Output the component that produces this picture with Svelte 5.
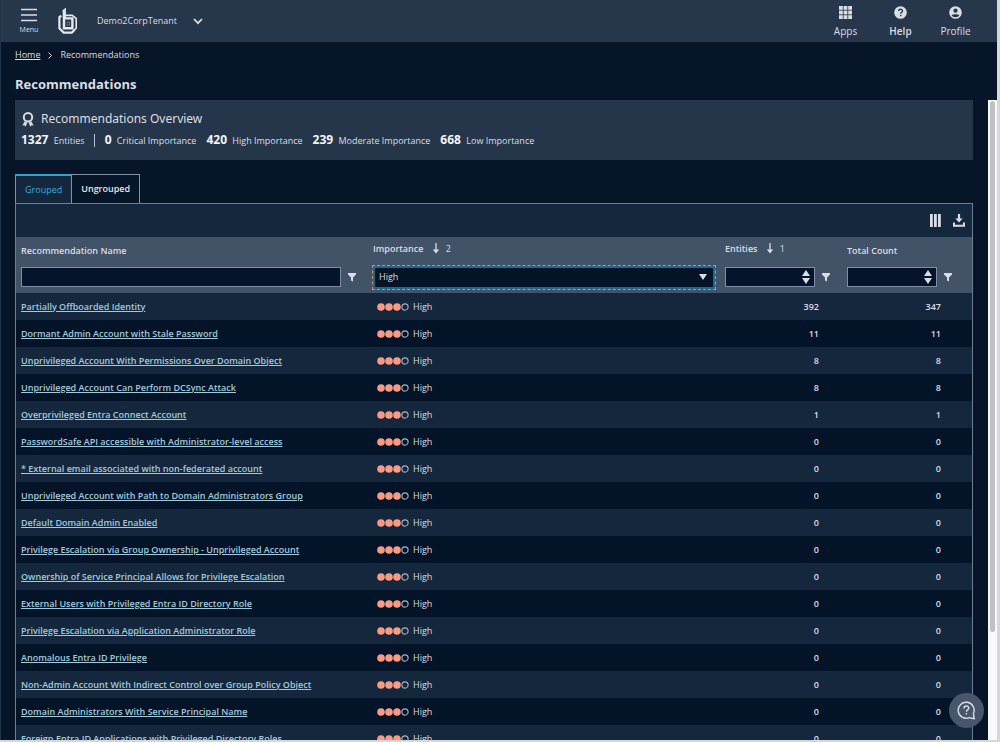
<script lang="ts">
	let tab = $state('grouped');
	let nameFilter = $state('');
	let importance = $state('High');
	let minEntities = $state<number | null>(null);
	let minTotal = $state<number | null>(null);

	const stats = [
		{ value: 0, label: 'Critical Importance' },
		{ value: 420, label: 'High Importance' },
		{ value: 239, label: 'Moderate Importance' },
		{ value: 668, label: 'Low Importance' }
	];

	const rows = [
		{ name: 'Partially Offboarded Identity', entities: 392, total: 347 },
		{ name: 'Dormant Admin Account with Stale Password', entities: 11, total: 11 },
		{ name: 'Unprivileged Account With Permissions Over Domain Object', entities: 8, total: 8 },
		{ name: 'Unprivileged Account Can Perform DCSync Attack', entities: 8, total: 8 },
		{ name: 'Overprivileged Entra Connect Account', entities: 1, total: 1 },
		{ name: 'PasswordSafe API accessible with Administrator-level access', entities: 0, total: 0 },
		{ name: '* External email associated with non-federated account', entities: 0, total: 0 },
		{ name: 'Unprivileged Account with Path to Domain Administrators Group', entities: 0, total: 0 },
		{ name: 'Default Domain Admin Enabled', entities: 0, total: 0 },
		{ name: 'Privilege Escalation via Group Ownership - Unprivileged Account', entities: 0, total: 0 },
		{ name: 'Ownership of Service Principal Allows for Privilege Escalation', entities: 0, total: 0 },
		{ name: 'External Users with Privileged Entra ID Directory Role', entities: 0, total: 0 },
		{ name: 'Privilege Escalation via Application Administrator Role', entities: 0, total: 0 },
		{ name: 'Anomalous Entra ID Privilege', entities: 0, total: 0 },
		{ name: 'Non-Admin Account With Indirect Control over Group Policy Object', entities: 0, total: 0 },
		{ name: 'Domain Administrators With Service Principal Name', entities: 0, total: 0 },
		{ name: 'Foreign Entra ID Applications with Privileged Directory Roles', entities: 0, total: 0 }
	];

	const visible = $derived(
		rows.filter(
			(r) =>
				r.name.toLowerCase().includes(nameFilter.toLowerCase()) &&
				r.entities >= (minEntities ?? 0) &&
				r.total >= (minTotal ?? 0)
		)
	);
</script>

{#snippet filterButton(label: string)}
	<button class="filter-btn" aria-label={label}>
		<svg width="8" height="9" viewBox="0 0 8 9"><path d="M0 0h8v1.6L5 4.6V8.6L3 7.4V4.6L0 1.6z" fill="currentColor" /></svg>
	</button>
{/snippet}

{#snippet sortArrow(order: number)}
	<svg class="sort" width="8" height="11" viewBox="0 0 8 11"><path d="M4 0v8" stroke="currentColor" stroke-width="1.3" /><path d="M.8 6.4h6.4L4 10.4z" fill="currentColor" /></svg>
	<span class="order">{order}</span>
{/snippet}

{#snippet stepper(step: (by: number) => void)}
	<span class="stepper">
		<button aria-label="Increase" onclick={() => step(1)}>
			<svg width="8" height="6" viewBox="0 0 8 6"><path d="M4 0l4 6H0z" fill="currentColor" /></svg>
		</button>
		<button aria-label="Decrease" onclick={() => step(-1)}>
			<svg width="8" height="6" viewBox="0 0 8 6"><path d="M4 6l4-6H0z" fill="currentColor" /></svg>
		</button>
	</span>
{/snippet}

<div class="app">
	<header class="topbar">
		<button class="menu">
			<svg width="16" height="14" viewBox="0 0 16 14"><path d="M0 1.5h16M0 7h16M0 12.5h16" stroke="currentColor" stroke-width="1.7" /></svg>
			<span>Menu</span>
		</button>
		<svg class="logo" width="20" height="26" viewBox="0 0 20 26" fill="none" stroke="#e6e9ee">
			<path d="M4.6 3.2L7.2 1v9.4" stroke-width="1.4" />
			<path d="M6 10V3" stroke-width="2.6" />
			<path d="M6 10.4h8.4v9.8H6z" stroke-width="2.4" />
			<path d="M9 14h2.6v3.2H9z" stroke-width=".6" stroke="#8f9bac" />
			<path d="M3.2 7.6L1.4 9.2v11l4.2 4.4h8.2l2.6-2.6" stroke-width="2.2" />
			<path d="M7.4 7.4h6.8l4 3v9.8l-2.4 2.4" stroke-width="1.6" />
		</svg>
		<button class="tenant">
			<span>Demo2CorpTenant</span>
			<svg width="10" height="7" viewBox="0 0 10 7"><path d="M1 1l4 4.2L9 1" fill="none" stroke="currentColor" stroke-width="1.8" /></svg>
		</button>
		<nav class="actions">
			<button>
				<svg width="13" height="13" viewBox="0 0 13 13" fill="currentColor">
					{#each [0, 4.6, 9.2] as y}
						{#each [0, 4.6, 9.2] as x}
							<rect {x} {y} width="3.8" height="3.8" />
						{/each}
					{/each}
				</svg>
				<span>Apps</span>
			</button>
			<button class="strong">
				<svg width="13" height="13" viewBox="0 0 13 13">
					<circle cx="6.5" cy="6.5" r="6.3" fill="currentColor" />
					<path d="M4.7 5.1c0-2.5 3.8-2.4 3.8-.2 0 1.3-1.8 1.4-1.8 2.8M6.7 8.8v1.4" fill="none" stroke="#26364b" stroke-width="1.3" />
				</svg>
				<span>Help</span>
			</button>
			<button>
				<svg width="13" height="13" viewBox="0 0 13 13">
					<circle cx="6.5" cy="6.5" r="6.3" fill="currentColor" />
					<circle cx="6.5" cy="4.7" r="2.1" fill="#26364b" />
					<path d="M2.6 9.6c1-1.9 6.8-1.9 7.8 0-1.8 2.3-6 2.3-7.8 0z" fill="#26364b" />
				</svg>
				<span>Profile</span>
			</button>
		</nav>
	</header>

	<nav class="crumbs" aria-label="Breadcrumb">
		<a href="#home">Home</a>
		<svg width="4" height="7" viewBox="0 0 4 7"><path d="M.5.5l3 3-3 3" fill="none" stroke="currentColor" /></svg>
		<span>Recommendations</span>
	</nav>
	<h1>Recommendations</h1>

	<div class="scroller">
		<main>
			<section class="overview">
				<h2>
					<svg width="12" height="15" viewBox="0 0 12 15">
						<circle cx="6" cy="5.2" r="4.2" fill="none" stroke="currentColor" stroke-width="2" />
						<path d="M2.4 9.8L.4 13.4l2-.2 1.2 1.6 1.8-4.2zM9.6 9.8l2 3.6-2-.2-1.2 1.6-1.8-4.2z" fill="currentColor" />
					</svg>
					Recommendations Overview
				</h2>
				<div class="stats">
					<span class="stat total"><b>1327</b> Entities</span>
					{#each stats as stat}
						<span class="stat"><b>{stat.value}</b> {stat.label}</span>
					{/each}
				</div>
			</section>

			<div class="tabs" role="tablist">
				<button role="tab" aria-selected={tab === 'grouped'} class:active={tab === 'grouped'} onclick={() => (tab = 'grouped')}>Grouped</button>
				<button role="tab" aria-selected={tab === 'ungrouped'} class:active={tab === 'ungrouped'} onclick={() => (tab = 'ungrouped')}>Ungrouped</button>
			</div>

			<section class="panel">
				<div class="toolbar">
					<button aria-label="Choose columns">
						<svg width="11" height="13" viewBox="0 0 11 13" fill="currentColor"><path d="M0 0h2.8v13H0zM4 0h2.8v13H4zM8 0h2.8v13H8z" /></svg>
					</button>
					<button aria-label="Download">
						<svg width="12" height="13" viewBox="0 0 12 13"><path d="M4.9 0h2.2v4.6h2.6L6 8.6 2.3 4.6h2.6z" fill="currentColor" /><path d="M1 8.4v3.4h10V8.4" fill="none" stroke="currentColor" stroke-width="2" /></svg>
					</button>
				</div>

				<table>
					<colgroup>
						<col />
						<col />
						<col class="col-entities" />
						<col class="col-total" />
					</colgroup>
					<thead>
						<tr class="titles">
							<th><label for="filter-name">Recommendation Name</label></th>
							<th class="sorted"><label for="filter-importance">Importance</label>{@render sortArrow(2)}</th>
							<th class="sorted"><label for="filter-entities">Entities</label>{@render sortArrow(1)}</th>
							<th><label for="filter-total">Total Count</label></th>
						</tr>
						<tr class="filters">
							<td>
								<div class="filter">
									<input id="filter-name" class="box" type="text" bind:value={nameFilter} />
									{@render filterButton('Filter by name')}
								</div>
							</td>
							<td>
								<div class="filter select">
									<select id="filter-importance" bind:value={importance}>
										<option>Critical</option>
										<option>High</option>
										<option>Moderate</option>
										<option>Low</option>
									</select>
									<svg width="8" height="6" viewBox="0 0 8 6"><path d="M0 0h8L4 6z" fill="currentColor" /></svg>
								</div>
							</td>
							<td>
								<div class="filter">
									<div class="box number">
										<input id="filter-entities" type="number" bind:value={minEntities} />
										{@render stepper((by) => (minEntities = (minEntities ?? 0) + by))}
									</div>
									{@render filterButton('Filter by entities')}
								</div>
							</td>
							<td class="last">
								<div class="filter">
									<div class="box number">
										<input id="filter-total" type="number" bind:value={minTotal} />
										{@render stepper((by) => (minTotal = (minTotal ?? 0) + by))}
									</div>
									{@render filterButton('Filter by total count')}
								</div>
							</td>
						</tr>
					</thead>
					<tbody>
						{#each visible as row}
							<tr>
								<td><a href="#recommendation">{row.name}</a></td>
								<td>
									<span class="level">
										<svg width="32" height="8" viewBox="0 0 32 8">
											<circle cx="4" cy="4" r="3.8" fill="#fb9a80" />
											<circle cx="12" cy="4" r="3.8" fill="#fb9a80" />
											<circle cx="20" cy="4" r="3.8" fill="#fb9a80" />
											<circle cx="28" cy="4" r="3.1" fill="none" stroke="#a9b3c1" stroke-width="1.1" />
										</svg>
										High
									</span>
								</td>
								<td class="num">{row.entities}</td>
								<td class="num total-count">{row.total}</td>
							</tr>
						{/each}
					</tbody>
				</table>
			</section>
		</main>
		<div class="scrollbar"><div class="thumb"></div></div>
	</div>

	<button class="support" aria-label="Support">
		<svg width="19" height="19" viewBox="0 0 19 19" fill="none" stroke="currentColor" stroke-width="1.4">
			<path d="M16.4 12.6A8 8 0 1 0 12.2 16.6L17.2 17.8z" stroke-linejoin="round" />
			<path d="M7 7.4c0-3.2 4.8-3 4.8-.3 0 1.7-2.4 1.9-2.4 3.6M9.4 12v1.6" />
		</svg>
	</button>
</div>

<style>
	:global(body) {
		background: #d4d7dc;
	}

	.app {
		position: relative;
		display: flex;
		flex-direction: column;
		box-sizing: border-box;
		height: calc(100vh - 2px);
		margin-right: 3px;
		overflow: hidden;
		background: #061527;
		border-left: 1px solid #22344a;
		color: #d9dee6;
		font: 9px/12px 'Open Sans', 'Noto Sans', sans-serif;
	}

	button,
	input,
	select {
		margin: 0;
		padding: 0;
		border: 0;
		background: none;
		color: inherit;
		font: inherit;
	}

	button {
		cursor: pointer;
	}

	svg {
		display: block;
		flex: none;
	}

	.topbar {
		display: flex;
		align-items: center;
		flex: none;
		height: 42px;
		padding: 0 14px 0 18px;
		background: #26364b;
	}

	.menu {
		display: flex;
		flex-direction: column;
		align-items: center;
		gap: 3px;
		width: 20px;
		font-size: 7px;
	}

	.menu span {
		line-height: 10px;
	}

	.logo {
		margin: 0 19px;
	}

	.tenant {
		display: flex;
		align-items: center;
		gap: 16px;
	}

	.actions {
		display: flex;
		margin-left: auto;
	}

	.actions button {
		display: flex;
		flex-direction: column;
		align-items: center;
		gap: 6px;
		width: 55px;
		font-size: 10px;
	}

	.actions .strong {
		font-weight: 600;
	}

	.crumbs {
		display: flex;
		align-items: center;
		gap: 8px;
		padding: 7px 14px;
	}

	.crumbs a {
		color: inherit;
	}

	h1 {
		margin: 6px 14px;
		font-size: 13px;
		line-height: 20px;
		font-weight: 700;
	}

	.scroller {
		display: flex;
		flex: 1;
		min-height: 0;
	}

	main {
		flex: 1;
		min-width: 0;
		margin: 0 15px 0 14px;
	}

	.scrollbar {
		width: 9px;
		background: #fafafc;
	}

	.thumb {
		width: 5px;
		height: 83%;
		margin: 1px auto;
		border-radius: 3px;
		background: #c1c1c3;
	}

	.overview {
		height: 44px;
		padding: 10px 6px 6px;
		background: #26364a;
	}

	h2 {
		display: flex;
		align-items: center;
		gap: 7px;
		margin: 0 1px 6px;
		font: 400 12px/18px 'Noto Sans', 'Open Sans', sans-serif;
	}

	.stats {
		display: flex;
		align-items: center;
		gap: 10px;
	}

	.stat b {
		margin-right: 3px;
		font-size: 12px;
		color: #f3f5f8;
	}

	.stat.total {
		padding-right: 9px;
		border-right: 1px solid #b9c1cc;
	}

	.tabs {
		display: flex;
		margin-top: 14px;
	}

	.tabs button {
		height: 29px;
		padding: 0 9px;
		border: 1px solid #8391a5;
		border-bottom: 0;
		color: #e3e7ed;
		font-weight: 600;
	}

	.tabs button + button {
		border-left: 0;
	}

	.tabs .active {
		border-top: 2px solid #2fa3cf;
		background: #15273c;
		color: #3bacd8;
		font-weight: 400;
	}

	.panel {
		border: 1px solid #6f7f94;
	}

	.toolbar {
		display: flex;
		justify-content: flex-end;
		align-items: center;
		gap: 12px;
		height: 33px;
		padding-right: 7px;
		background: #15273c;
	}

	table {
		width: 100%;
		table-layout: fixed;
		border-spacing: 0;
	}

	.col-entities {
		width: 122px;
	}

	.col-total {
		width: 130px;
	}

	th,
	td {
		padding: 0 5px;
		text-align: left;
		vertical-align: middle;
	}

	thead {
		background: #435367;
	}

	.titles {
		height: 27px;
	}

	th {
		font-weight: 600;
	}

	.sorted {
		padding-bottom: 2px;
	}

	.sort {
		display: inline-block;
		margin: 0 3px 2px 9px;
		vertical-align: middle;
	}

	.order {
		font-weight: 400;
	}

	.filters td {
		height: 26px;
		padding-bottom: 3px;
	}

	.filters .last {
		padding-right: 13px;
	}

	.filter {
		display: flex;
		align-items: center;
	}

	.filter-btn {
		display: flex;
		justify-content: center;
		width: 22px;
	}

	.box {
		box-sizing: border-box;
		flex: 1;
		min-width: 0;
		height: 20px;
		padding: 0 4px;
		border: 1px solid #7e8ea5;
		background: #05142a;
	}

	.number {
		display: flex;
		align-items: center;
	}

	.number input {
		flex: 1;
		min-width: 0;
		width: 0;
		appearance: textfield;
	}

	.stepper {
		display: flex;
		flex-direction: column;
		gap: 2px;
	}

	.stepper button {
		display: block;
	}

	.select {
		box-sizing: border-box;
		height: 23px;
		padding-right: 6px;
		border: 2px solid #1f688d;
		outline: 1px dashed #d98a68;
		background: #041325;
	}

	.select select {
		flex: 1;
		height: 19px;
		padding-left: 4px;
		appearance: none;
		outline: 0;
	}

	tbody tr {
		height: 27px;
		background: #041428;
	}

	tbody tr:nth-child(odd) {
		background: #15273d;
	}

	tbody a {
		color: #a0cbdc;
		font-weight: 600;
		white-space: nowrap;
	}

	.level {
		display: flex;
		align-items: center;
		gap: 4px;
		padding-left: 4px;
	}

	.num {
		padding-right: 23px;
		text-align: right;
		font-weight: 600;
	}

	.total-count {
		padding-right: 31px;
	}

	.support {
		position: absolute;
		right: 13px;
		bottom: 12px;
		display: flex;
		align-items: center;
		justify-content: center;
		width: 35px;
		height: 35px;
		border-radius: 50%;
		background: #48566b;
	}
</style>
